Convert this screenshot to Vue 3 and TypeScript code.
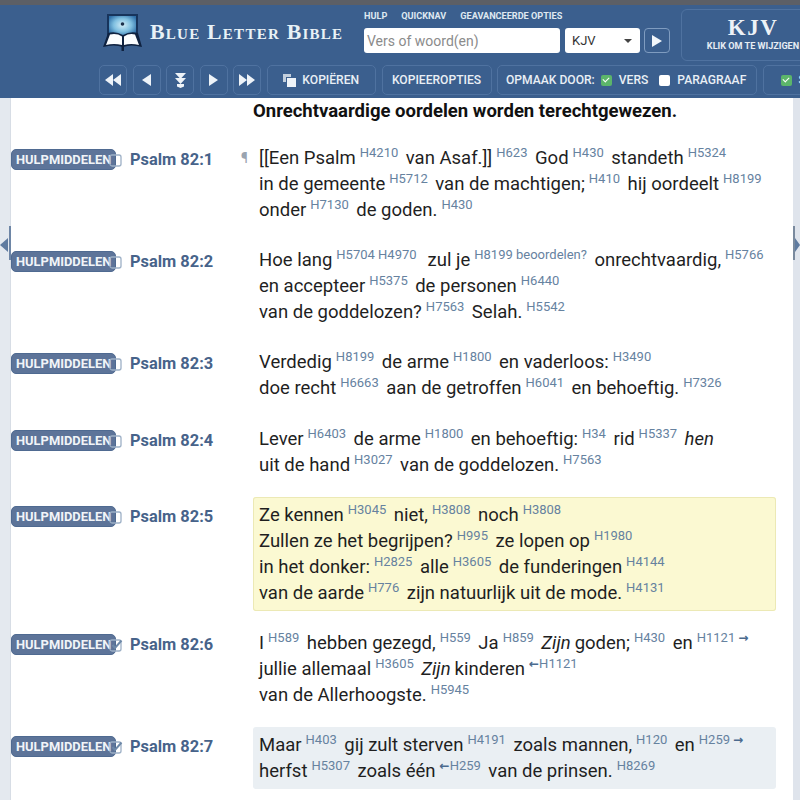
<script setup lang="ts">
type Seg = { t?: string; s?: string; i?: boolean; wide?: boolean; before?: string; after?: string };
interface Verse { ref: string; tone?: string; checked?: boolean; mark?: boolean; lines: Seg[][] }

const W = (t: string): Seg => ({ t });
const S = (s: string): Seg => ({ s });
const I = (t: string): Seg => ({ t, i: true });

const verses: Verse[] = [
  { ref: 'Psalm 82:1', mark: true, lines: [
    [W('[[Een Psalm'), S('H4210'), W('van Asaf.]]'), S('H623'), W('God'), S('H430'), W('standeth'), S('H5324')],
    [W('in de gemeente'), S('H5712'), W('van de machtigen;'), S('H410'), W('hij oordeelt'), S('H8199')],
    [W('onder'), S('H7130'), W('de goden.'), S('H430')],
  ] },
  { ref: 'Psalm 82:2', lines: [
    [W('Hoe lang'), { s: 'H5704 H4970', wide: true }, W('zul je'), S('H8199 beoordelen?'), W('onrechtvaardig,'), S('H5766')],
    [W('en accepteer'), S('H5375'), W('de personen'), S('H6440')],
    [W('van de goddelozen?'), S('H7563'), W('Selah.'), S('H5542')],
  ] },
  { ref: 'Psalm 82:3', lines: [
    [W('Verdedig'), S('H8199'), W('de arme'), S('H1800'), W('en vaderloos:'), S('H3490')],
    [W('doe recht'), S('H6663'), W('aan de getroffen'), S('H6041'), W('en behoeftig.'), S('H7326')],
  ] },
  { ref: 'Psalm 82:4', lines: [
    [W('Lever'), S('H6403'), W('de arme'), S('H1800'), W('en behoeftig:'), S('H34'), W('rid'), S('H5337'), I('hen')],
    [W('uit de hand'), S('H3027'), W('van de goddelozen.'), S('H7563')],
  ] },
  { ref: 'Psalm 82:5', tone: 'yellow', lines: [
    [W('Ze kennen'), S('H3045'), W('niet,'), S('H3808'), W('noch'), S('H3808')],
    [W('Zullen ze het begrijpen?'), S('H995'), W('ze lopen op'), S('H1980')],
    [W('in het donker:'), S('H2825'), W('alle'), S('H3605'), W('de funderingen'), S('H4144')],
    [W('van de aarde'), S('H776'), W('zijn natuurlijk uit de mode.'), S('H4131')],
  ] },
  { ref: 'Psalm 82:6', checked: true, lines: [
    [W('I'), S('H589'), W('hebben gezegd,'), S('H559'), W('Ja'), S('H859'), I('Zijn'), W('goden;'), S('H430'), W('en'), { s: 'H1121', after: '→' }],
    [W('jullie allemaal'), S('H3605'), I('Zijn'), W('kinderen'), { s: 'H1121', before: '←' }],
    [W('van de Allerhoogste.'), S('H5945')],
  ] },
  { ref: 'Psalm 82:7', tone: 'gray', checked: true, lines: [
    [W('Maar'), S('H403'), W('gij zult sterven'), S('H4191'), W('zoals mannen,'), S('H120'), W('en'), { s: 'H259', after: '→' }],
    [W('herfst'), S('H5307'), W('zoals één'), { s: 'H259', before: '←' }, W('van de prinsen.'), S('H8269')],
  ] },
];
</script>

<template>
  <div class="page">
    <div class="topstrip"></div>
    <header class="head">
      <div class="head-top">
        <div class="brand">
          <svg class="logo" viewBox="0 0 40 38" width="40" height="38">
            <defs>
              <radialGradient id="scr" cx="50%" cy="45%" r="60%">
                <stop offset="0" stop-color="#d4eef8" />
                <stop offset="0.55" stop-color="#7fbfe0" />
                <stop offset="1" stop-color="#2f6fa8" />
              </radialGradient>
            </defs>
            <rect x="4" y="0" width="31" height="23" fill="#17345c" />
            <rect x="6" y="2" width="27" height="20" fill="url(#scr)" />
            <circle cx="19.500" cy="10" r="1.800" fill="#1c2f4a" />
            <path d="M0 33 L5 19 Q13 17 20 21 Q27 17 35 19 L39 33 Q28 30 20 33 Q11 30 0 33 Z" fill="#0f2240" />
            <path d="M3 31 L7 20.500 Q14 19 19 22.500 L19 31 Q11 29 3 31 Z M36 31 L32 20.500 Q26 19 21 22.500 L21 31 Q28 29 36 31 Z" fill="#fbfdff" />
            <rect x="18.500" y="32" width="2.500" height="5" fill="#0f2240" />
          </svg>
          <span class="brand-name">Blue Letter Bible</span>
        </div>
        <div class="search">
          <nav class="search-nav">
            <span>HULP</span><span>QUICKNAV</span><span>GEAVANCEERDE OPTIES</span>
          </nav>
          <div class="search-row">
            <div class="field">Vers of woord(en)</div>
            <div class="select"><span>KJV</span><i class="caret"></i></div>
            <div class="go"><i class="tri-r"></i></div>
          </div>
        </div>
        <div class="version">
          <strong>KJV</strong>
          <span>KLIK OM TE WIJZIGEN</span>
        </div>
      </div>
      <div class="tools">
        <div class="tool sq">
          <svg viewBox="0 0 16 12" width="16" height="12"><path d="M8 0v12L0 6zM16 0v12L8 6z" fill="#eef3f8" /></svg>
        </div>
        <div class="tool sq">
          <svg viewBox="0 0 9 12" width="9" height="12"><path d="M9 0v12L0 6z" fill="#eef3f8" /></svg>
        </div>
        <div class="tool sq">
          <svg viewBox="0 0 11 15" width="11" height="15"><path d="M0 0h11L5.500 6zM0 5h11L5.500 11zM2 11h7v2.500L5.500 15 2 13.500z" fill="#eef3f8" /></svg>
        </div>
        <div class="tool sq">
          <svg viewBox="0 0 9 12" width="9" height="12"><path d="M0 0v12l9-6z" fill="#eef3f8" /></svg>
        </div>
        <div class="tool sq">
          <svg viewBox="0 0 16 12" width="16" height="12"><path d="M0 0v12l8-6zM8 0v12l8-6z" fill="#eef3f8" /></svg>
        </div>
        <div class="tool copy">
          <svg viewBox="0 0 13 13" width="13" height="13"><path d="M0 0h8v3H3v5H0z" fill="#c3cfdd" /><rect x="4" y="4" width="9" height="9" fill="#eef3f8" /></svg>
          KOPIËREN
        </div>
        <div class="tool opts">KOPIEEROPTIES</div>
        <div class="tool fmt">
          <span class="fmt-lead">OPMAAK DOOR:</span>
          <i class="cb on"></i><span class="lbl">VERS</span>
          <i class="cb"></i><span class="lbl">PARAGRAAF</span>
        </div>
        <div class="tool last"><i class="cb on"></i><span class="lbl">STRONG</span></div>
      </div>
    </header>

    <main class="content">
      <div class="edge edge-l"><i class="rail"></i><i class="arrow-l"></i></div>
      <div class="edge edge-r"><i class="rail"></i><i class="arrow-r"></i></div>
      <h2 class="title">Onrechtvaardige oordelen worden terechtgewezen.</h2>
      <div class="verses">
        <section v-for="v in verses" :key="v.ref" class="verse">
          <div class="hm">
            <span class="hm-btn">HULPMIDDELEN</span>
            <svg class="hm-ico" viewBox="0 0 14 15" width="14" height="15">
              <rect x="1" y="3" width="11" height="11" rx="2" fill="none" stroke="#9db0c6" stroke-width="1.300" />
              <path v-if="v.checked" d="M3.500 8 L6 11 L12.500 3.500" fill="none" stroke="#6d88a8" stroke-width="2" />
            </svg>
          </div>
          <div class="ref">{{ v.ref }}</div>
          <div class="body" :class="v.tone">
            <i v-if="v.mark" class="pil">¶</i>
            <div v-for="(line, n) in v.lines" :key="n" class="line">
              <template v-for="(seg, k) in line" :key="k">
                <sup v-if="seg.s" class="st" :class="{ wide: seg.wide }"><b v-if="seg.before" class="ar">{{ seg.before }}</b>{{ seg.s }}<b v-if="seg.after" class="ar after">{{ seg.after }}</b></sup>
                <em v-else-if="seg.i" class="w">{{ seg.t }}</em>
                <span v-else class="w">{{ seg.t }}</span>
              </template>
            </div>
          </div>
        </section>
      </div>
    </main>
  </div>
</template>

<style>
html, body { margin: 0; padding: 0; background: #fff; }
</style>

<style scoped>
.page {
  width: 800px;
  height: 800px;
  overflow: hidden;
  display: flex;
  flex-direction: column;
  font-family: Roboto, "Liberation Sans", sans-serif;
  background: #fff;
}
.topstrip { height: 5px; background: #5c5f66; flex: none; }
.head {
  flex: none;
  height: 93px;
  background: #3b5f8e;
  box-sizing: border-box;
  padding: 4px 0 0 99px;
  overflow: hidden;
  color: #e9eff5;
}
.head-top { display: flex; height: 52px; width: 760px; }
.brand { flex: none; display: flex; align-items: center; width: 265px; padding-left: 4px; box-sizing: border-box; gap: 7px; margin-top: -5px; }
.logo { flex: none; }
.brand-name {
  font-family: "Liberation Serif", serif;
  font-variant: small-caps;
  font-size: 21.800px;
  font-weight: 700;
  letter-spacing: 1.250px;
  color: #e8f1f6;
  white-space: nowrap;
}
.search { width: 317px; flex: none; }
.search-nav { display: flex; gap: 14px; font-size: 9.150px; font-weight: 700; height: 19px; box-sizing: border-box; padding-bottom: 5px; align-items: center; color: #dfe8f1; }
.search-row { display: flex; gap: 5px; align-items: center; }
.field, .select {
  background: #fff;
  height: 25px;
  border-radius: 3px;
  display: flex;
  align-items: center;
  box-sizing: border-box;
  font-size: 14px;
}
.field { width: 196px; padding-left: 3px; color: #8b8b8b; }
.select { width: 75px; padding: 0 8px 0 7px; color: #333; justify-content: space-between; font-size: 13px; }
.caret { border-left: 4px solid transparent; border-right: 4px solid transparent; border-top: 4px solid #444; }
.go {
  width: 26px; height: 25px; box-sizing: border-box;
  border: 1px solid #7f9cc0; border-radius: 4px;
  display: flex; align-items: center; justify-content: center;
  margin-left: -1px;
}
.tri-r { border-top: 6px solid transparent; border-bottom: 6px solid transparent; border-left: 10px solid #f2f6fa; }
.version {
  flex: none;
  width: 144px;
  height: 52px;
  box-sizing: border-box;
  border: 1px solid #4f72a0;
  border-radius: 6px;
  display: flex;
  flex-direction: column;
  align-items: center;
  padding-top: 5px;
}
.version strong { font-family: "Liberation Serif", serif; font-size: 23px; letter-spacing: 1.500px; line-height: 26px; color: #edf2f7; }
.version span { font-size: 9.100px; font-weight: 700; line-height: 11px; white-space: nowrap; color: #e6edf4; }
.tools { display: flex; gap: 5.500px; margin-top: 4px; height: 30px; width: 780px; }
.tool {
  flex: none;
  height: 30px;
  box-sizing: border-box;
  border: 1px solid #4f72a0;
  border-radius: 5px;
  display: flex;
  align-items: center;
  justify-content: center;
  font-size: 12.100px;
  font-weight: 500;
  white-space: nowrap;
}
.sq { width: 28px; }
.copy { width: 109.500px; gap: 6px; }
.opts { width: 110px; }
.fmt { width: 260px; justify-content: flex-start; padding-left: 8px; }
.fmt-lead { margin-right: 6px; }
.last { width: 80px; justify-content: flex-start; padding-left: 17px; }
.lbl { margin-left: 7px; margin-right: 11px; }
.cb { flex: none; width: 11px; height: 11px; background: #fff; border-radius: 2px; display: block; position: relative; }
.cb.on { background: #5cb56a; }
.cb.on::after {
  content: "";
  position: absolute; left: 2px; top: 2px;
  width: 5px; height: 3px;
  border-left: 1.500px solid #fff; border-bottom: 1.500px solid #fff;
  transform: rotate(-45deg);
}
.content { position: relative; flex: 1; min-height: 0; padding: 0 24px 0 11px; }
.edge { position: absolute; top: 0; bottom: 0; width: 10px; background: #e4e9ef; }
.edge-l { left: 0; border-right: 1px solid #d7dde5; }
.edge-r { right: 0; width: 7px; background: #dfe4ec; }
.rail { position: absolute; top: 128px; height: 34px; width: 2px; background: #6e86a6; }
.edge-l .rail { right: -1px; }
.edge-r .rail { left: 0; background: #7a8a9e; }
.arrow-l, .arrow-r { position: absolute; top: 140px; border-top: 7px solid transparent; border-bottom: 7px solid transparent; }
.arrow-l { left: 0; border-right: 8px solid #5f7ba0; }
.arrow-r { left: 2px; border-left: 5px solid #5f7ba0; }
.title {
  margin: 0;
  padding-left: 242px;
  font-size: 18.500px;
  line-height: 26px;
  font-weight: 700;
  color: #111;
  white-space: nowrap;
}
.verses { display: flex; flex-direction: column; gap: 14.200px; margin-top: 16px; }
.verse { display: flex; align-items: flex-start; }
.hm { width: 119px; flex: none; position: relative; padding-top: 9px; height: 20px; }
.hm-btn {
  display: block;
  width: 105px;
  height: 21px;
  line-height: 19px;
  box-sizing: border-box;
  padding-left: 4px;
  background: #5d7499;
  border: 1px solid #4f6a91;
  border-radius: 5px;
  color: #f1f4f8;
  font-size: 12.900px;
  font-weight: 700;
  white-space: nowrap;
  overflow: hidden;
}
.hm-ico { position: absolute; left: 98px; top: 12px; }
.ref { width: 123px; flex: none; padding-top: 8px; font-size: 16.400px; line-height: 24px; font-weight: 700; color: #47638a; }
.body { position: relative; width: 523px; box-sizing: border-box; padding: 5px 5px 5px 6px; border-radius: 3px; }
.body.yellow { background: #fbf9d2; box-shadow: inset 0 0 0 1px #ece9b5; }
.body.gray { background: #eaeff3; }
.pil { position: absolute; left: -12px; top: 9px; font-style: normal; font-size: 14px; line-height: 18px; color: #9aa4b0; }
.line { display: flex; align-items: baseline; height: 26px; line-height: 26px; white-space: nowrap; font-size: 18.500px; color: #1f1f1f; }
.w { margin-right: 4px; }
.st {
  font-size: 13px;
  line-height: 12px;
  color: #66829f;
  margin: 0 7.500px 0 0;
  position: relative;
  top: -7px;
  vertical-align: baseline;
}
.st.wide { margin-right: 11px; }
.ar { font-family: "DejaVu Sans", sans-serif; font-size: 12px; font-weight: 700; color: #4b6a8e; }
.ar.after { margin-left: 3px; }
</style>
